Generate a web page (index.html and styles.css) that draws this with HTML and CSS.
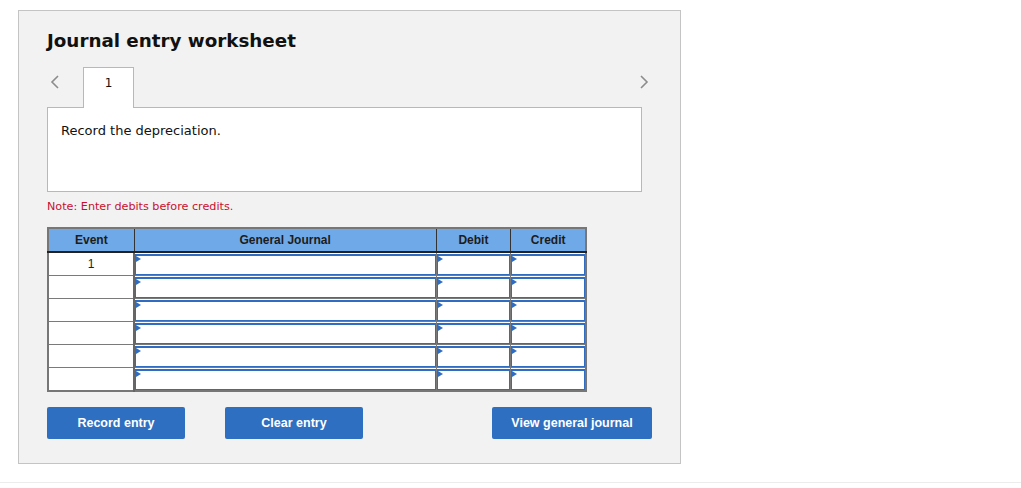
FILE: index.html
```html
<!DOCTYPE html>
<html>
<head>
<meta charset="utf-8">
<link rel="stylesheet" href="styles.css">
</head>
<body>
<div class="panel">
  <h1 class="title">Journal entry worksheet</h1>
  <div class="tabs">
    <span class="chev chev-left"><svg width="10" height="14" viewBox="0 0 10 14"><path d="M8 1 L2 7 L8 13" fill="none" stroke="#8c8c8c" stroke-width="1.6"/></svg></span>
    <div class="tab">1</div>
    <span class="spacer"></span>
    <span class="chev chev-right"><svg width="10" height="14" viewBox="0 0 10 14"><path d="M2 1 L8 7 L2 13" fill="none" stroke="#8c8c8c" stroke-width="1.6"/></svg></span>
  </div>
  <div class="prompt">Record the depreciation.</div>
  <p class="note">Note: Enter debits before credits.</p>
  <table class="journal">
    <thead>
      <tr><th class="c-event">Event</th><th class="c-gj">General Journal</th><th class="c-dr">Debit</th><th class="c-cr">Credit</th></tr>
    </thead>
    <tbody>
      <tr><td class="ev">1</td><td class="in"><div class="box"></div></td><td class="in"><div class="box"></div></td><td class="in"><div class="box"></div></td></tr>
      <tr><td class="ev"></td><td class="in"><div class="box"></div></td><td class="in"><div class="box"></div></td><td class="in"><div class="box"></div></td></tr>
      <tr><td class="ev"></td><td class="in"><div class="box"></div></td><td class="in"><div class="box"></div></td><td class="in"><div class="box"></div></td></tr>
      <tr><td class="ev"></td><td class="in"><div class="box"></div></td><td class="in"><div class="box"></div></td><td class="in"><div class="box"></div></td></tr>
      <tr><td class="ev"></td><td class="in"><div class="box"></div></td><td class="in"><div class="box"></div></td><td class="in"><div class="box"></div></td></tr>
      <tr><td class="ev"></td><td class="in"><div class="box"></div></td><td class="in"><div class="box"></div></td><td class="in"><div class="box"></div></td></tr>
    </tbody>
  </table>
  <div class="actions">
    <button class="btn">Record entry</button>
    <button class="btn btn-clear">Clear entry</button>
    <span class="spacer"></span>
    <button class="btn btn-view">View general journal</button>
  </div>
</div>
<div class="rule"></div>
</body>
</html>
```
FILE: styles.css
```css
html, body { margin: 0; padding: 0; background: #fff; }
body { font-family: "DejaVu Sans", Verdana, sans-serif; color: #111; }

.panel {
  margin: 10px 0 0 18px;
  width: 604px;
  height: 452px;
  background: #f2f2f2;
  border: 1px solid #c4c4c4;
  padding: 0 29px 0 28px;
  box-sizing: content-box;
  display: flex;
  flex-direction: column;
}

.title {
  margin: 20px 0 0 0;
  font-size: 18.3px;
  font-weight: bold;
  line-height: 20px;
  color: #111;
}

.tabs {
  display: flex;
  align-items: flex-start;
  margin-top: 16px;
  height: 41px;
  width: 605px;
}
.chev { display: flex; margin-top: 8px; }
.chev-left { margin-left: 3px; width: 33px; }
.chev-right { margin-right: 3px; }
.tab {
  width: 51px;
  height: 41px;
  border: 1px solid #b8b8b8;
  border-bottom: none;
  background: #fff;
  font-size: 12px;
  text-align: center;
  line-height: 30px;
  position: relative;
  z-index: 1;
  box-sizing: border-box;
}
.spacer { flex: 1; }

.prompt {
  width: 595px;
  height: 85px;
  box-sizing: border-box;
  background: #fff;
  border: 1px solid #b8b8b8;
  margin-top: -1px;
  padding: 15px 0 0 13px;
  font-size: 13px;
  line-height: 16px;
}

.note {
  margin: 8px 0 0 0;
  font-size: 11.2px;
  line-height: 14px;
  color: #c8102e;
}

.journal {
  margin-top: 13px;
  border-collapse: collapse;
  width: 540px;
  font-family: "Liberation Sans", Arial, sans-serif;
  font-size: 12px;
  border: 2px solid #777;
}
.journal th {
  background: #70a9e8;
  color: #1c1c1c;
  font-weight: bold;
  height: 22px;
  padding: 0;
  border-right: 1px solid #333;
  border-bottom: 2px solid #222;
  border-top: 1px solid #777;
  line-height: 20px;
}
.journal th:last-child { border-right: 1px solid #777; }
.c-event { width: 85px; }
.c-gj { width: 303px; }
.c-dr { width: 74px; }
.c-cr { width: 74px; }

.journal td {
  height: 22px;
  padding: 0;
  background: #fff;
  border: 1px solid #7a7a7a;
}
.journal td.ev { text-align: center; color: #222; line-height: 20px; border-right: 2px solid #666; }
.journal td.in { padding: 0; position: relative; }
.box {
  height: 21px;
  border: 1px solid #2f6dc2;
  border-top: 2px solid #2f6dc2;
  box-sizing: border-box;
  background: #fff;
  position: relative;
}
.box::before {
  content: "";
  position: absolute;
  left: 0;
  top: 0;
  border-left: 5px solid #2f6dc2;
  border-top: 3px solid transparent;
  border-bottom: 3px solid transparent;
}

.actions {
  display: flex;
  margin-top: 15px;
  width: 605px;
}
.btn {
  width: 138px;
  height: 32px;
  background: #2e6fc1;
  color: #fff;
  border: none;
  border-radius: 2px;
  font-family: "Liberation Sans", Arial, sans-serif;
  font-weight: bold;
  font-size: 12.5px;
  padding: 0;
}
.btn-clear { margin-left: 40px; }
.btn-view { width: 160px; }

.rule {
  margin-top: 18px;
  height: 1px;
  background: #ececec;
  width: 1021px;
}
```
